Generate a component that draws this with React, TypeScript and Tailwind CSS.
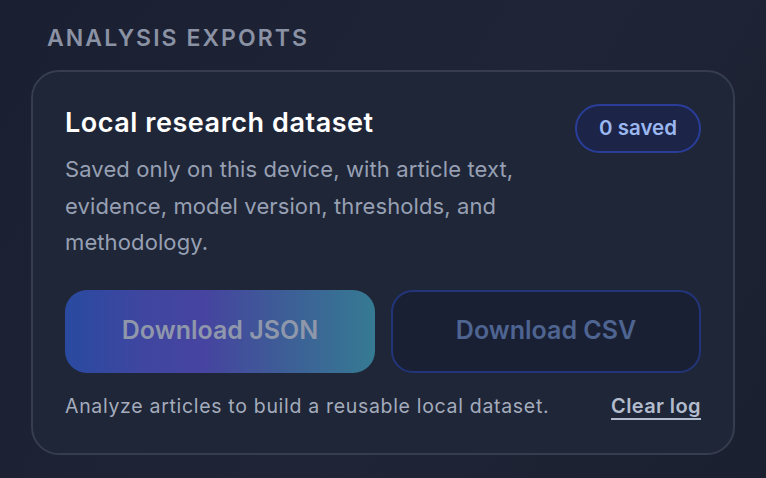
import React from 'react';

export default function App() {
    const savedCount = 0;

    return (
        <div
            className="w-[766px] h-[478px] overflow-hidden bg-[linear-gradient(120deg,#1a1f31_0%,#1f2537_55%,#1b2030_100%)] px-[31px] pt-[25px]"
            style={{ fontFamily: 'Inter, "Noto Sans", sans-serif' }}
        >
            <h2 className="ml-[16px] text-[23px] font-semibold tracking-[0.09em] text-[#8a92a4] leading-[26px]">
                ANALYSIS EXPORTS
            </h2>

            <section className="mt-[19px] rounded-[28px] border-2 border-[#353d4f] bg-[#1f2638] px-[32px] pt-[34px] pb-[33px]">
                <div className="flex items-start justify-between">
                    <div>
                        <h3 className="text-[27px] font-semibold text-white leading-[34px] tracking-[0.02em]">
                            Local research dataset
                        </h3>
                        <p className="mt-[11px] w-[480px] text-[22px] leading-[36.5px] tracking-[0.005em] text-[#97a0b3]">
                            Saved only on this device, with article text, evidence, model version, thresholds, and methodology.
                        </p>
                    </div>
                    <span className="-mt-[2px] flex h-[49px] items-center rounded-full border-2 border-[#2a3d99] bg-[#1c2448] px-[22px] text-[20.5px] font-semibold text-[#9bb8f0]">
                        {savedCount} saved
                    </span>
                </div>

                <div className="mt-[29px] grid grid-cols-2 gap-[16px]">
                    <button
                        disabled
                        className="h-[83px] rounded-[22px] bg-[linear-gradient(90deg,#294aa0_0%,#3f46a0_25%,#4644a0_45%,#3f5898_65%,#357a92_100%)] text-[25px] font-semibold text-[#8f97ab]"
                    >
                        Download JSON
                    </button>
                    <button
                        disabled
                        className="h-[83px] rounded-[22px] border-2 border-[#23357a] bg-[#1a2034] text-[25px] font-semibold text-[#4e6491]"
                    >
                        Download CSV
                    </button>
                </div>

                <div className="mt-[19px] flex items-center justify-between">
                    <p className="text-[19.5px] tracking-[0.035em] text-[#a4acbc] leading-[28px]">
                        Analyze articles to build a reusable local dataset.
                    </p>
                    <button className="text-[20px] font-semibold tracking-[0.02em] text-[#b3bccc] underline underline-offset-[5px] decoration-2 leading-[28px]">
                        Clear log
                    </button>
                </div>
            </section>
        </div>
    );
}
